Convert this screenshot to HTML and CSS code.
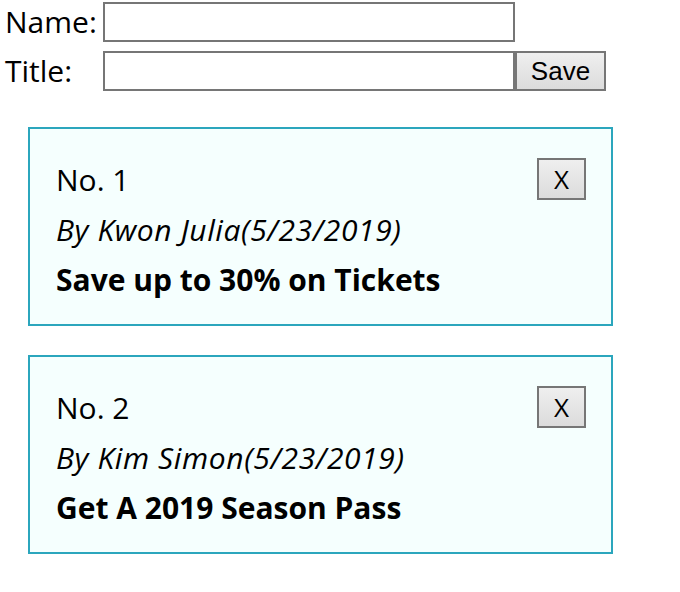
FILE: index.html
```html
<!DOCTYPE html>
<html>
<head>
<meta charset="utf-8">
<link rel="stylesheet" href="styles.css">
</head>
<body>
<div class="form">
  <label class="lbl">Name:</label>
  <input class="field" type="text">
  <span></span>
  <label class="lbl">Title:</label>
  <input class="field" type="text">
  <button class="save">Save</button>
</div>
<div class="list">
  <div class="card">
    <div class="card-head">
      <div class="no">No. 1</div>
      <button class="del">X</button>
    </div>
    <div class="by">By Kwon Julia(5/23/2019)</div>
    <div class="title">Save up to 30% on Tickets</div>
  </div>
  <div class="card">
    <div class="card-head">
      <div class="no">No. 2</div>
      <button class="del">X</button>
    </div>
    <div class="by">By Kim Simon(5/23/2019)</div>
    <div class="title">Get A 2019 Season Pass</div>
  </div>
</div>
</body>
</html>
```
FILE: styles.css
```css
html, body {
  margin: 0;
  padding: 0;
  background: #ffffff;
}
body {
  font-family: "Open Sans", "Noto Sans", sans-serif;
  color: #000;
}
.form {
  display: grid;
  grid-template-columns: 103px 412px 91px;
  row-gap: 9px;
  padding-top: 2px;
  align-items: center;
}
.lbl {
  font-size: 30px;
  padding-left: 5px;
  line-height: 44px;
  margin: -2px 0;
}
.field {
  box-sizing: border-box;
  width: 412px;
  height: 40px;
  border: 2px solid #767676;
  background: #fff;
  margin: 0;
  padding: 0 4px;
}
.save {
  box-sizing: border-box;
  width: 91px;
  height: 40px;
  margin: 0;
  font-family: "Liberation Sans", Arial, sans-serif;
  font-size: 26px;
  color: #000;
  border: 2px solid #767676;
  background: linear-gradient(#efefef, #dcdcdc);
  padding: 0;
}
.list {
  padding: 36px 0 0 28px;
  display: flex;
  flex-direction: column;
  gap: 29px;
}
.card {
  box-sizing: border-box;
  width: 585px;
  height: 199px;
  border: 2px solid #2ba6bd;
  background: #f5fffe;
  padding: 29px 25px 0 26px;
}
.card-head {
  display: flex;
  justify-content: space-between;
  align-items: flex-start;
}
.no {
  font-size: 30px;
  line-height: 40px;
  margin-top: 2px;
}
.del {
  box-sizing: border-box;
  width: 49px;
  height: 42px;
  margin: 0;
  padding: 0;
  font-family: "Open Sans", sans-serif;
  font-size: 26px;
  color: #000;
  border: 2px solid #767676;
  background: linear-gradient(#efefef, #dcdcdc);
}
.by {
  font-size: 30px;
  font-style: italic;
  letter-spacing: 0.6px;
  line-height: 50px;
  margin-top: 5px;
}
.title {
  font-size: 30px;
  font-weight: bold;
  line-height: 50px;
}
```
